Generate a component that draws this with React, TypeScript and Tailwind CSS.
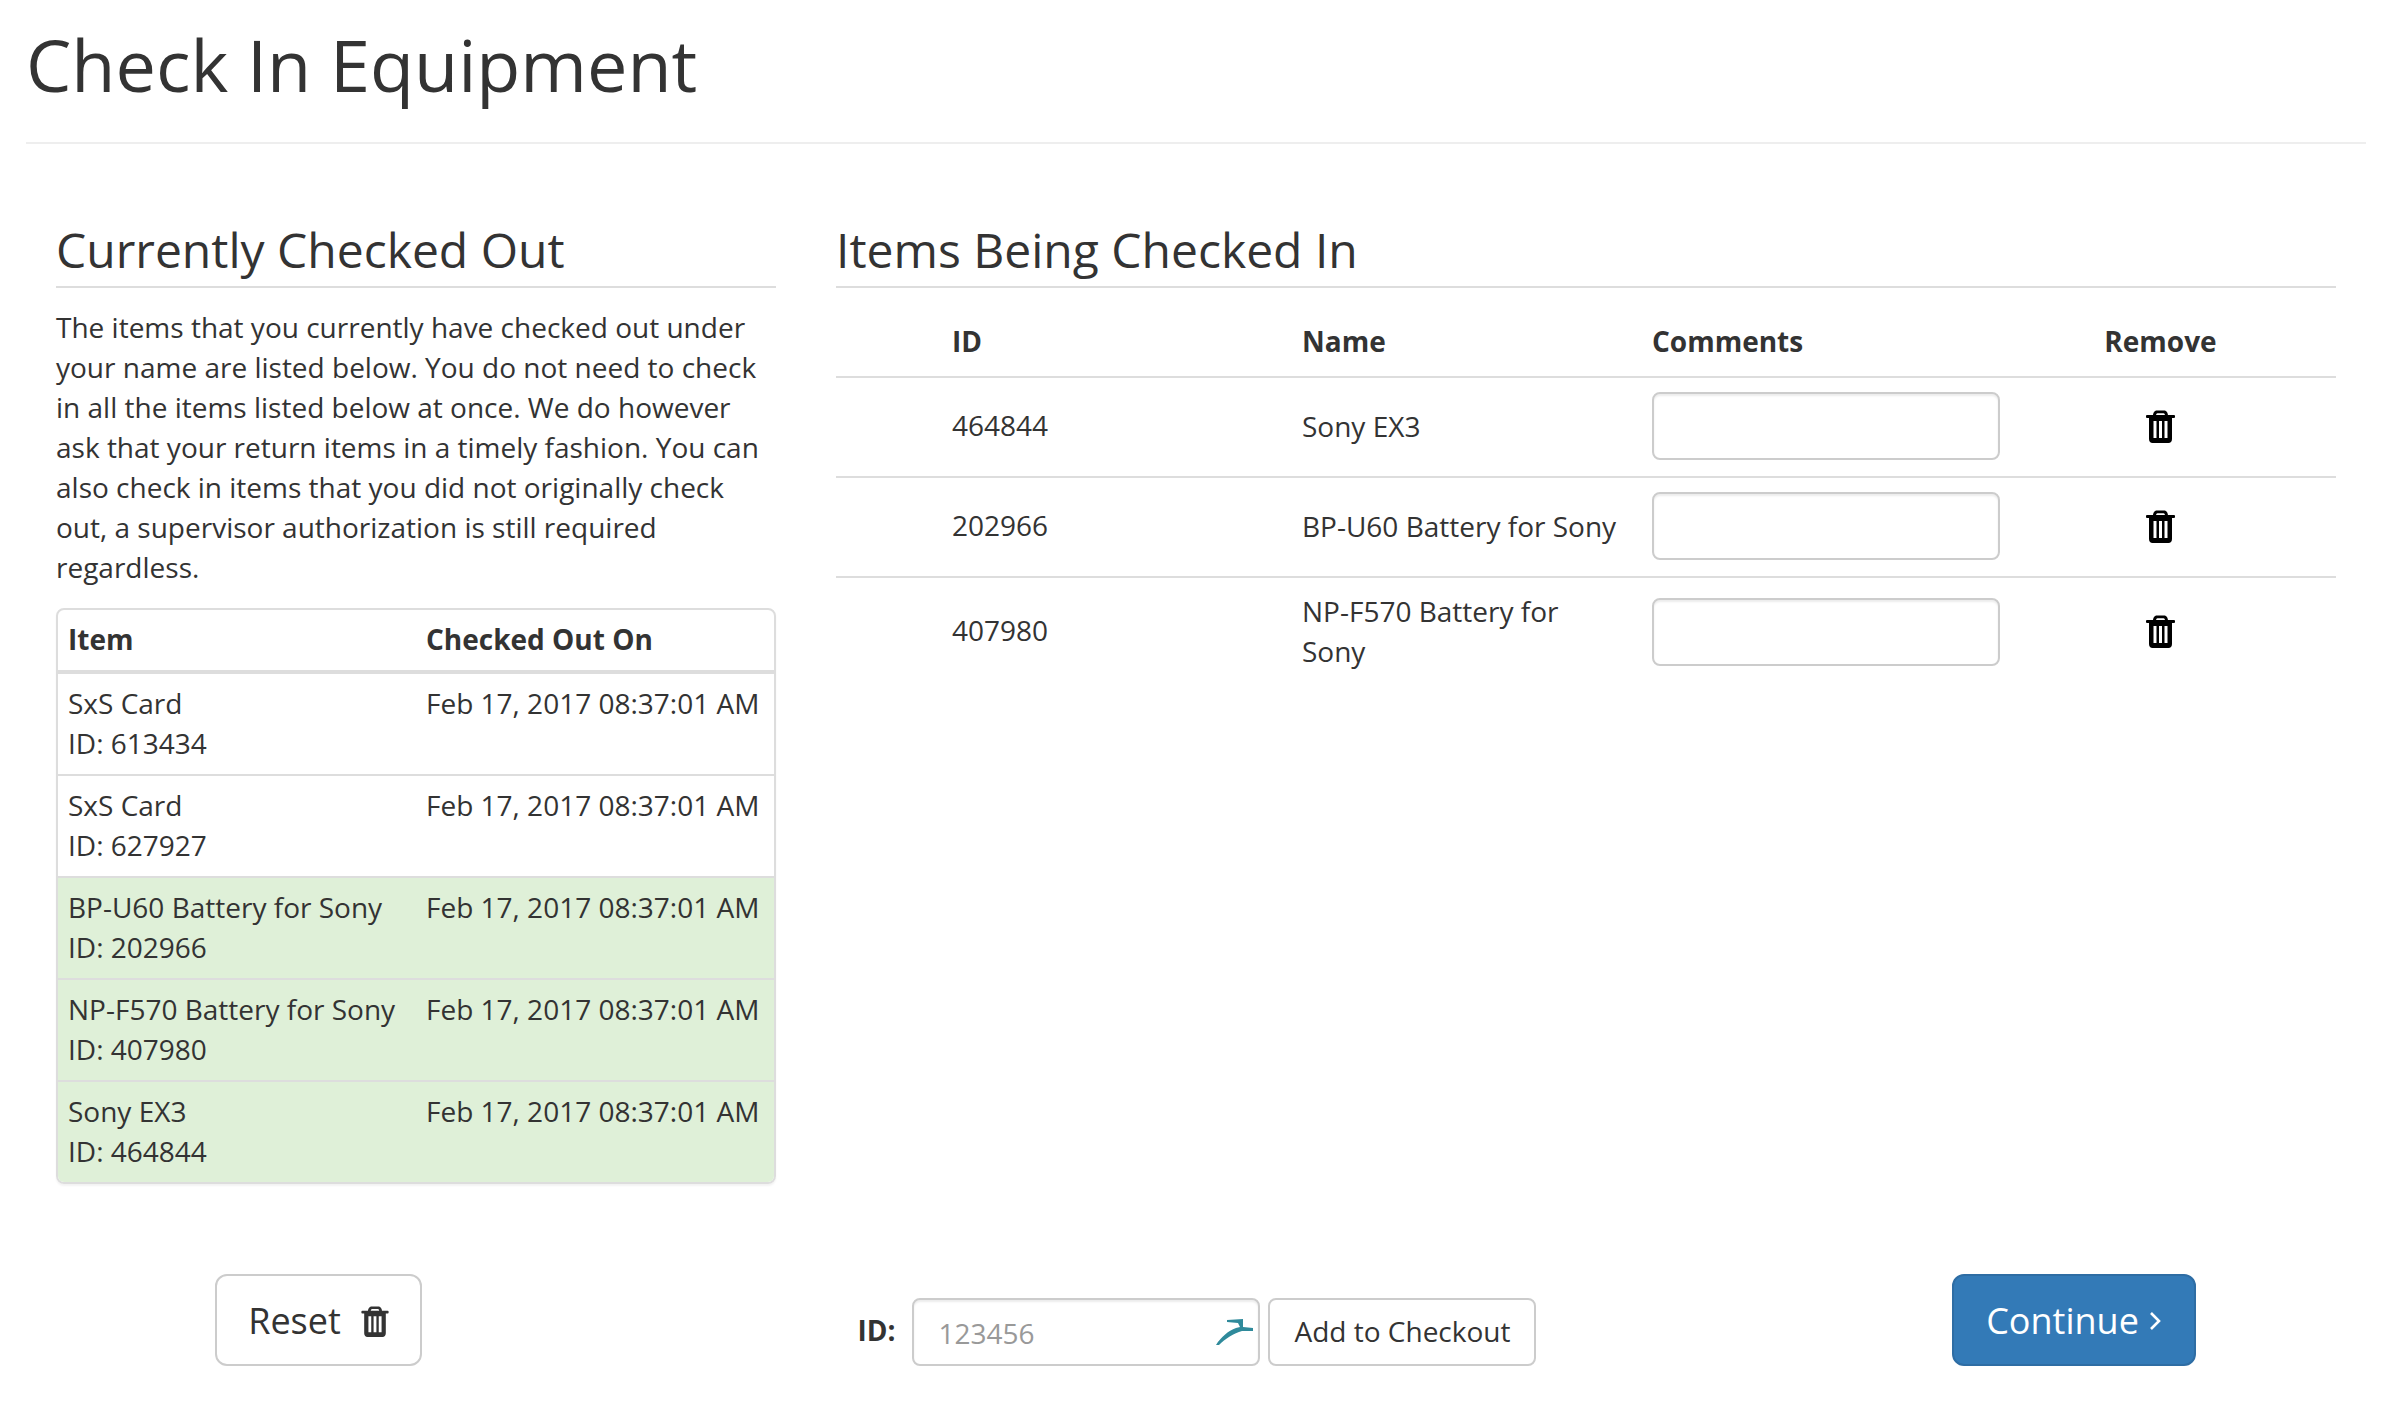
const checkedOut = [
  { name: 'SxS Card', id: '613434', returning: false },
  { name: 'SxS Card', id: '627927', returning: false },
  { name: 'BP-U60 Battery for Sony', id: '202966', returning: true },
  { name: 'NP-F570 Battery for Sony', id: '407980', returning: true },
  { name: 'Sony EX3', id: '464844', returning: true },
];

const checkingIn = [
  { id: '464844', name: 'Sony EX3' },
  { id: '202966', name: 'BP-U60 Battery for Sony' },
  { id: '407980', name: 'NP-F570 Battery for Sony' },
];

function TrashIcon({ className }: { className: string }) {
  return (
    <svg viewBox="0 0 29 33" className={className} fill="currentColor">
      <path d="M7 6 C7 2 9 0.5 11 0.5 H18 C20 0.5 22 2 22 6 H19 C19 4 18.5 3.2 17.5 3.2 H11.5 C10.5 3.2 10 4 10 6 Z" />
      <rect x="0" y="5" width="29" height="3" rx="1" />
      <path
        fillRule="evenodd"
        d="M3 7 H26 V29 C26 31.5 24.5 33 22.5 33 H6.5 C4.5 33 3 31.5 3 29 Z M7.5 11 V28 H10.5 V11 Z M13 11 V28 H16 V11 Z M18.5 11 V28 H21.5 V11 Z"
      />
    </svg>
  );
}

export default function App() {
  return (
    <div className="min-h-[1424px] w-[2392px] bg-white pl-[26px] pr-[26px] text-[28px] leading-[40px] text-[#333] font-['Open_Sans',sans-serif]">
      {/* Page header */}
      <h1 className="border-b-2 border-[#eee] pt-[25px] pb-[38px] text-[72px] leading-[79px] font-normal">Check In Equipment</h1>

      <div className="grid grid-cols-[780px_1560px] pt-[79px]">
        {/* Left column */}
        <div className="px-[30px]">
          <h3 className="border-b-2 border-[#ddd] pb-[10px] text-[48px] leading-[53px] font-normal">Currently Checked Out</h3>
          <p className="mt-[19px]">
            The items that you currently have checked out under your name are listed below. You do not need to check in all the items listed below at once. We do however ask that your return items in a timely fashion. You can also check in items that you did not originally check out, a supervisor authorization is still required regardless.
          </p>
          <div className="mt-[21px] overflow-hidden rounded-lg border-2 border-[#ddd] shadow-[0_2px_2px_rgba(0,0,0,0.05)]">
            <table className="w-full table-fixed border-separate border-spacing-0">
              <thead>
                <tr>
                  <th className="w-[358px] border-b-4 border-[#ddd] px-[10px] pt-[9px] pb-[11px] text-left font-bold">Item</th>
                  <th className="border-b-4 border-[#ddd] px-[10px] pt-[9px] pb-[11px] text-left font-bold">Checked Out On</th>
                </tr>
              </thead>
              <tbody>
                {checkedOut.map((item, i) => (
                  <tr key={item.id} className={item.returning ? 'bg-[#dff0d8]' : 'bg-white'}>
                    <td className={`px-[10px] pt-[9px] pb-[11px] align-top ${i > 0 ? 'border-t-2 border-[#ddd]' : ''}`}>
                      {item.name}
                      <br />
                      ID: {item.id}
                    </td>
                    <td className={`px-[10px] pt-[9px] pb-[11px] align-top whitespace-nowrap ${i > 0 ? 'border-t-2 border-[#ddd]' : ''}`}>
                      Feb 17, 2017 08:37:01 AM
                    </td>
                  </tr>
                ))}
              </tbody>
            </table>
          </div>
        </div>

        {/* Right column */}
        <div className="px-[30px]">
          <h3 className="border-b-2 border-[#ddd] pb-[10px] text-[48px] leading-[53px] font-normal">Items Being Checked In</h3>
          <table className="mt-[23px] w-full table-fixed border-separate border-spacing-0">
            <thead>
              <tr>
                <th className="w-[106px] border-b-2 border-[#ddd] pb-[15px] pt-[10px]"></th>
                <th className="w-[350px] border-b-2 border-[#ddd] px-[10px] pb-[15px] pt-[10px] text-left font-bold">ID</th>
                <th className="w-[350px] border-b-2 border-[#ddd] px-[10px] pb-[15px] pt-[10px] text-left font-bold">Name</th>
                <th className="w-[367px] border-b-2 border-[#ddd] px-[10px] pb-[15px] pt-[10px] text-left font-bold">Comments</th>
                <th className="w-[303px] border-b-2 border-[#ddd] px-[10px] pb-[15px] pt-[10px] text-center font-bold">Remove</th>
                <th className="border-b-2 border-[#ddd] pb-[15px] pt-[10px]"></th>
              </tr>
            </thead>
            <tbody>
              {checkingIn.map((row, i) => {
                const line = i > 0 ? 'border-t-2 border-[#ddd]' : '';
                return (
                  <tr key={row.id}>
                    <td className={line}></td>
                    <td className={`px-[10px] pb-[4px] align-middle ${line}`}>{row.id}</td>
                    <td className={`pl-[10px] pr-[20px] pt-[13px] pb-[15px] align-middle ${line}`}>{row.name}</td>
                    <td className={`px-[10px] align-middle ${line}`}>
                      <input className={`block h-[68px] w-[348px] rounded-lg border-2 border-[#ccc] bg-white shadow-[inset_0_2px_2px_rgba(0,0,0,0.075)] ${i === 2 ? 'mt-[15px] mb-[15px]' : 'mt-[14px] mb-[16px]'}`} />
                    </td>
                    <td className={`px-[10px] pb-[1px] align-middle ${line}`}>
                      <TrashIcon className="mx-auto h-[33px] w-[29px] text-black" />
                    </td>
                    <td className={line}></td>
                  </tr>
                );
              })}
            </tbody>
          </table>
        </div>
      </div>

      {/* Footer actions */}
      <div className="mt-[90px] grid grid-cols-[585px_1170px_585px] items-end">
        <div className="flex justify-center">
          <button className="flex h-[92px] w-[207px] items-center justify-center gap-[20px] rounded-xl border-2 border-[#ccc] bg-white pt-[2px] text-[36px]">
            Reset
            <TrashIcon className="h-[31px] w-[28px] text-[#333]" />
          </button>
        </div>
        <div className="flex items-center justify-center pl-[2px]">
          <label className="mb-[4px] mr-[17px] font-bold">ID:</label>
          <div className="relative">
            <input
              placeholder="123456"
              className="block h-[68px] w-[348px] rounded-lg border-2 border-[#ccc] bg-white px-[24px] pt-[2px] shadow-[inset_0_2px_2px_rgba(0,0,0,0.075)] placeholder:text-[#999]"
            />
            <svg viewBox="0 0 37 26" className="absolute right-[7px] top-[21px] h-[26px] w-[37px]" fill="#2f8a9b">
              <path d="M0 26 C5 18 12 12 20 9 L24 8 L22 4 L11 3 L11 1 L27 0 L27 8 L37 9 L37 12 L26 12 C18 14 9 20 3 26 Z" />
            </svg>
          </div>
          <button className="ml-[8px] h-[68px] w-[268px] rounded-lg border-2 border-[#ccc] bg-white pb-[3px]">Add to Checkout</button>
        </div>
        <div className="flex justify-center">
          <button className="flex h-[92px] w-[244px] items-center justify-center gap-[10px] rounded-xl border-2 border-[#2e6da4] bg-[#337ab7] pt-[2px] text-[36px] text-white">
            Continue
            <svg viewBox="0 0 12 20" className="h-[20px] w-[12px]" fill="none" stroke="currentColor" strokeWidth="2.6">
              <path d="M2 2 L10 10 L2 18" />
            </svg>
          </button>
        </div>
      </div>
    </div>
  );
}
